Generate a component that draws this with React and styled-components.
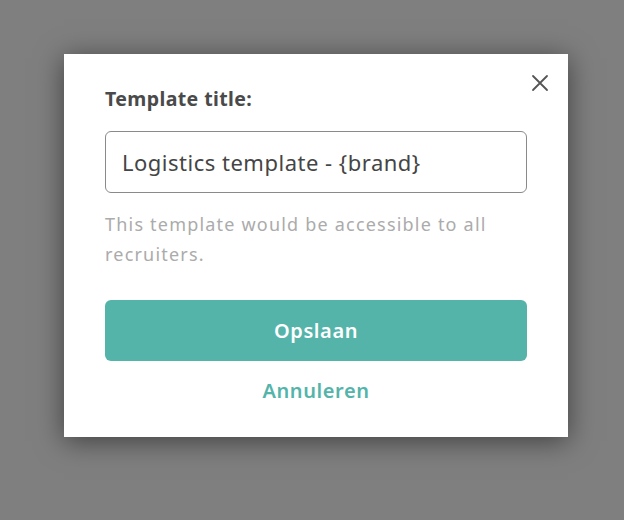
import React from "react";
import styled, { createGlobalStyle } from "styled-components";

const GlobalStyle = createGlobalStyle`
	html, body {
		margin: 0;
		padding: 0;
		height: 100%;
	}
	body {
		background: #7f7f7f;
		font-family: "Noto Sans", "Open Sans", sans-serif;
	}
	#root {
		height: 100%;
	}
`;

const Overlay = styled.div`
	width: 624px;
	height: 520px;
	padding-top: 54px;
	padding-left: 64px;
	box-sizing: border-box;
`;

const Modal = styled.div`
	position: relative;
	width: 504px;
	height: 383px;
	box-sizing: border-box;
	background: #fff;
	box-shadow: 0 4px 26px rgba(0, 0, 0, 0.5);
	padding: 32px 41px 0 41px;
	display: flex;
	flex-direction: column;
`;

const CloseButton = styled.button`
	position: absolute;
	top: 17px;
	right: 16px;
	width: 24px;
	height: 24px;
	padding: 0;
	border: none;
	background: none;
	display: flex;
	align-items: center;
	justify-content: center;
	cursor: pointer;
`;

const Label = styled.label`
	font-size: 19.5px;
	font-weight: 700;
	letter-spacing: 0.4px;
	color: #4a4a4a;
	line-height: 26px;
	margin-bottom: 19px;
`;

const TextInput = styled.input`
	height: 62px;
	box-sizing: border-box;
	border: 1px solid #8a8a8a;
	border-radius: 6px;
	padding: 0 16px;
	font-family: inherit;
	font-size: 22px;
	letter-spacing: 0.5px;
	color: #454545;
	outline: none;
`;

const Hint = styled.p`
	margin: 16px 0 0 0;
	font-size: 18px;
	letter-spacing: 1.2px;
	line-height: 30px;
	color: #ababab;
`;

const PrimaryButton = styled.button`
	margin-top: 31px;
	height: 61px;
	border: none;
	border-radius: 6px;
	background: #54b4aa;
	color: #fff;
	font-family: inherit;
	font-size: 20px;
	font-weight: 600;
	letter-spacing: 0.6px;
	cursor: pointer;
`;

const LinkButton = styled.button`
	margin-top: 13px;
	border: none;
	background: none;
	color: #54b4aa;
	font-family: inherit;
	font-size: 20px;
	font-weight: 600;
	letter-spacing: 0.6px;
	line-height: 32px;
	cursor: pointer;
`;

export default function App() {
	return (
		<>
			<GlobalStyle />
			<Overlay>
				<Modal>
					<CloseButton aria-label="Close">
						<svg width="18" height="18" viewBox="0 0 18 18">
							<path
								d="M2 2 L16 16 M16 2 L2 16"
								stroke="#555"
								strokeWidth="1.8"
								strokeLinecap="round"
							/>
						</svg>
					</CloseButton>
					<Label htmlFor="title">Template title:</Label>
					<TextInput id="title" defaultValue="Logistics template - {brand}" />
					<Hint>This template would be accessible to all recruiters.</Hint>
					<PrimaryButton>Opslaan</PrimaryButton>
					<LinkButton>Annuleren</LinkButton>
				</Modal>
			</Overlay>
		</>
	);
}
